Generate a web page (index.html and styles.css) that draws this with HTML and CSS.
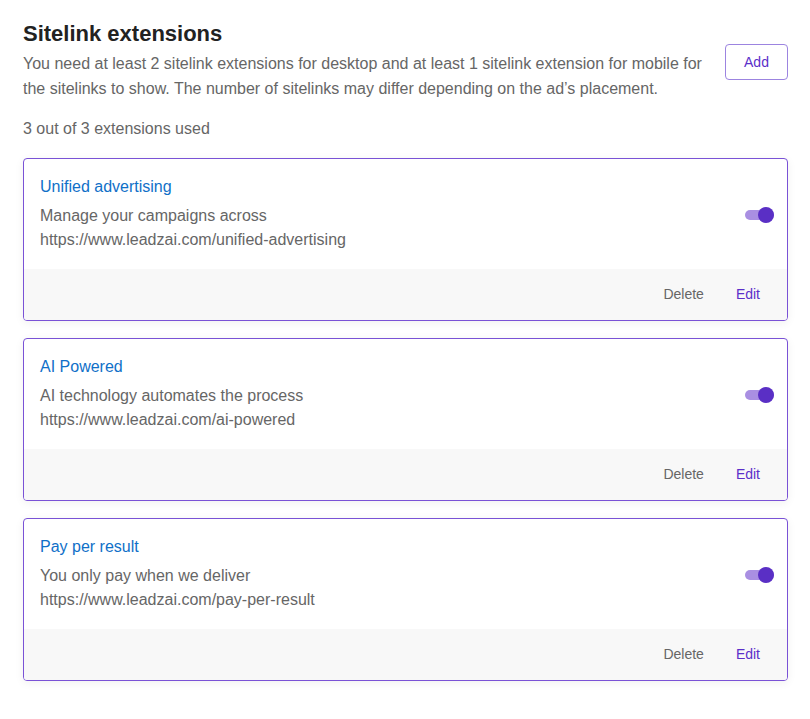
FILE: index.html
```html
<!DOCTYPE html>
<html>
<head>
<meta charset="utf-8">
<link rel="stylesheet" href="styles.css">
</head>
<body>
<div class="page">
  <div class="header">
    <div class="header-text">
      <h1 class="title">Sitelink extensions</h1>
      <p class="desc">You need at least 2 sitelink extensions for desktop and at least 1 sitelink extension for mobile for the sitelinks to show. The number of sitelinks may differ depending on the ad’s placement.</p>
    </div>
    <button class="add-btn">Add</button>
  </div>
  <div class="count">3 out of 3 extensions used</div>
  <div class="cards">
    <div class="card">
      <div class="card-body">
        <div class="card-info">
          <div class="card-title">Unified advertising</div>
          <div class="card-text">Manage your campaigns across</div>
          <div class="card-text">https://www.leadzai.com/unified-advertising</div>
        </div>
        <div class="toggle"><span class="knob"></span></div>
      </div>
      <div class="card-footer"><span class="delete">Delete</span><span class="edit">Edit</span></div>
    </div>
    <div class="card">
      <div class="card-body">
        <div class="card-info">
          <div class="card-title">AI Powered</div>
          <div class="card-text">AI technology automates the process</div>
          <div class="card-text">https://www.leadzai.com/ai-powered</div>
        </div>
        <div class="toggle"><span class="knob"></span></div>
      </div>
      <div class="card-footer"><span class="delete">Delete</span><span class="edit">Edit</span></div>
    </div>
    <div class="card">
      <div class="card-body">
        <div class="card-info">
          <div class="card-title">Pay per result</div>
          <div class="card-text">You only pay when we deliver</div>
          <div class="card-text">https://www.leadzai.com/pay-per-result</div>
        </div>
        <div class="toggle"><span class="knob"></span></div>
      </div>
      <div class="card-footer"><span class="delete">Delete</span><span class="edit">Edit</span></div>
    </div>
  </div>
</div>
</body>
</html>
```
FILE: styles.css
```css
* { box-sizing: border-box; }
body {
  margin: 0;
  background: #fff;
  font-family: "Liberation Sans", Arial, sans-serif;
  color: #666;
}
.page {
  padding: 21px 22px 20px 23px;
}
.header {
  display: flex;
  justify-content: space-between;
  align-items: flex-start;
}
.header-text { width: 690px; }
.title {
  margin: 0;
  font-size: 22px;
  line-height: 26px;
  font-weight: bold;
  color: #222;
}
.desc {
  margin: 4px 0 0;
  font-size: 16px;
  line-height: 25px;
  color: #666;
}
.add-btn {
  margin-top: 23px;
  width: 63px;
  height: 36px;
  background: #fff;
  border: 1px solid #9c84e0;
  border-radius: 4px;
  color: #5b2fc9;
  font-family: "Liberation Sans", Arial, sans-serif;
  font-size: 14px;
  padding: 0;
}
.count {
  margin-top: 18px;
  font-size: 16px;
  line-height: 20px;
  color: #666;
}
.cards {
  margin-top: 19px;
  display: flex;
  flex-direction: column;
  gap: 17px;
}
.card {
  border: 1px solid #7a52d6;
  border-radius: 4px;
  overflow: hidden;
  box-shadow: 0 2px 10px rgba(0, 0, 0, 0.06);
  background: #fff;
}
.card-body {
  display: flex;
  align-items: center;
  justify-content: space-between;
  padding: 18px 13px 17px 16px;
}
.card-title {
  font-size: 16px;
  line-height: 20px;
  color: #1070c8;
  margin-bottom: 7px;
}
.card-text {
  font-size: 16px;
  line-height: 24px;
  color: #666;
}
.toggle {
  position: relative;
  width: 29px;
  height: 10px;
  border-radius: 5px;
  background: #a98fe2;
}
.knob {
  position: absolute;
  right: 0;
  top: -3px;
  width: 16px;
  height: 16px;
  border-radius: 50%;
  background: #5a2fc5;
}
.card-footer {
  background: #f8f8f8;
  height: 51px;
  display: flex;
  justify-content: flex-end;
  align-items: center;
  gap: 32px;
  padding: 0 27px 2px 0;
  font-size: 14px;
}
.delete { color: #666; }
.edit { color: #5b2fc9; }
```
